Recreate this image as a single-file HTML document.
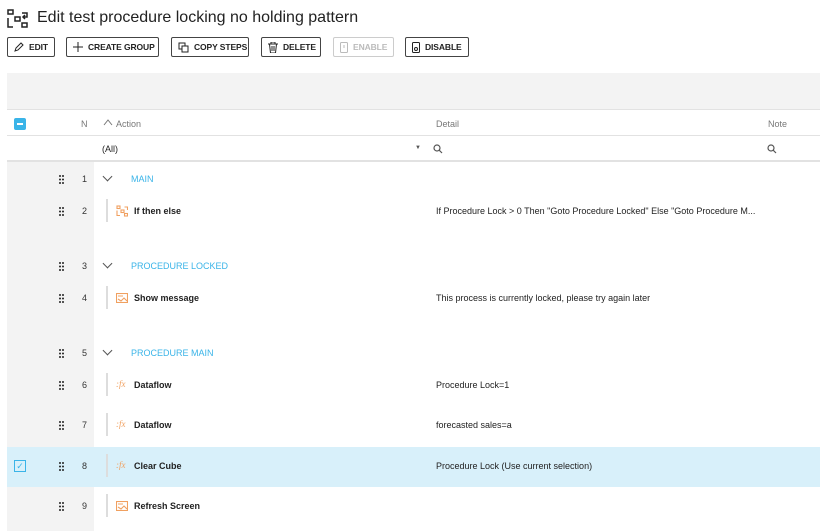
<!DOCTYPE html>
<html><head><style>
*{margin:0;padding:0;box-sizing:border-box}
body{width:820px;height:531px;overflow:hidden;background:#fff;font-family:"Liberation Sans",sans-serif;color:#222;position:relative}
.a{position:absolute}
.btn{position:absolute;top:37px;height:20px;border:1px solid #444;border-radius:2px;font-size:8.5px;font-weight:bold;display:flex;align-items:center;padding-left:6px;gap:5px;color:#222;white-space:nowrap;letter-spacing:-0.1px}
.btn svg{flex:none}
.btn.dis{border-color:#ccc;color:#bbb}
.grip{position:absolute;left:59px}
.n{position:absolute;left:82px;font-size:9px;color:#333}
.chev{position:absolute;left:104px;width:7px;height:7px;border-right:1px solid #555;border-bottom:1px solid #555;transform:rotate(45deg)}
.grp{position:absolute;left:131px;font-size:9px;color:#3ab4e8}
.bar{position:absolute;left:106px;width:2px;height:23px;background:#ddd}
.nm{position:absolute;left:134px;font-size:9px;font-weight:bold}
.dt{position:absolute;left:436px;font-size:9px}
.ic{position:absolute;left:116px}
.fx{position:absolute;left:116px;font-size:9px;color:#f0a060;font-style:italic;font-family:"Liberation Serif",serif}
</style></head><body>
<svg width="0" height="0" style="position:absolute"><defs><g id="g"><circle cx="1" cy="1" r="1"/><circle cx="4" cy="1" r="1"/><circle cx="1" cy="4.5" r="1"/><circle cx="4" cy="4.5" r="1"/><circle cx="1" cy="8" r="1"/><circle cx="4" cy="8" r="1"/></g></defs></svg>
<svg class="a" style="left:7px;top:9px" width="22" height="20" viewBox="0 0 22 20" fill="none" stroke="#222" stroke-width="1.5"><rect x="1" y="1" width="5" height="4"/><rect x="8" y="8" width="5" height="4"/><rect x="15" y="14" width="5" height="4"/><path d="M1 9v9h5M15 4h5v4h-4M18 6l-2 2 2 2"/></svg>
<div class="a" style="left:37px;top:9px;font-size:16px;color:#222">Edit test procedure locking no holding pattern</div>
<div class="btn" style="left:7px;width:48px"><svg width="10" height="10" viewBox="0 0 10 10" fill="none" stroke="#222"><path d="M1 9l1-3 5-5 2 2-5 5z"/></svg>EDIT</div>
<div class="btn" style="left:66px;width:93px"><svg width="10" height="10" viewBox="0 0 10 10" stroke="#222"><path d="M5 0v10M0 5h10"/></svg>CREATE GROUP</div>
<div class="btn" style="left:171px;width:78px"><svg width="11" height="11" viewBox="0 0 11 11" fill="none" stroke="#222"><rect x="1" y="1" width="6" height="6"/><rect x="4" y="4" width="6" height="6" fill="#fff"/></svg>COPY STEPS</div>
<div class="btn" style="left:261px;width:60px"><svg width="10" height="11" viewBox="0 0 10 11" fill="none" stroke="#222"><path d="M0 2h10M3 2V0h4v2M1.5 2l1 9h5l1-9M4 4v5M6 4v5"/></svg>DELETE</div>
<div class="btn dis" style="left:333px;width:61px"><svg width="8" height="11" viewBox="0 0 8 11" fill="none" stroke="#bbb"><rect x="0.5" y="0.5" width="7" height="10" rx="1"/><path d="M4 3v3"/></svg>ENABLE</div>
<div class="btn" style="left:405px;width:64px"><svg width="8" height="11" viewBox="0 0 8 11" fill="none" stroke="#222"><rect x="0.5" y="0.5" width="7" height="10" rx="1"/><circle cx="4" cy="7" r="1.5"/></svg>DISABLE</div>
<div class="a" style="left:7px;top:73px;width:813px;height:37px;background:#f3f3f3;border-bottom:1px solid #e2e2e2"></div>
<div class="a" style="left:7px;top:135px;width:813px;height:1px;background:#e2e2e2"></div>
<div class="a" style="left:7px;top:160px;width:813px;height:2px;background:#e2e2e2"></div>
<div class="a" style="left:14px;top:118px;width:12px;height:12px;background:#3ab4e8;border-radius:2px"><div style="margin:5px 3px;height:2px;background:#fff"></div></div>
<div class="a" style="left:81px;top:119px;font-size:9px;color:#777">N</div>
<svg class="a" style="left:103px;top:119px" width="10" height="7" viewBox="0 0 10 7" fill="none" stroke="#777"><path d="M1 6l4-5 4 5"/></svg>
<div class="a" style="left:116px;top:119px;font-size:9px;color:#777">Action</div>
<div class="a" style="left:436px;top:119px;font-size:9px;color:#777">Detail</div>
<div class="a" style="left:768px;top:119px;font-size:9px;color:#777">Note</div>
<div class="a" style="left:102px;top:144px;font-size:9px">(All)</div>
<div class="a" style="left:415px;top:145px;font-size:6px;color:#555">▼</div>
<svg class="a" style="left:433px;top:144px" width="10" height="10" viewBox="0 0 10 10" fill="none" stroke="#555" stroke-width="1.2"><circle cx="4" cy="4" r="3"/><path d="M6.2 6.2L9 9"/></svg>
<svg class="a" style="left:767px;top:144px" width="10" height="10" viewBox="0 0 10 10" fill="none" stroke="#555" stroke-width="1.2"><circle cx="4" cy="4" r="3"/><path d="M6.2 6.2L9 9"/></svg>
<div class="a" style="left:7px;top:162px;width:87px;height:369px;background:#f3f3f3"></div>
<div class="a" style="left:7px;top:447px;width:813px;height:40px;background:#d8f0fa"></div>
<div class="a" style="left:14px;top:460px;width:12px;height:12px;border:1px solid #3ab4e8;color:#3ab4e8;font-size:9px;line-height:10px;text-align:center">✓</div>

<svg class="grip" style="top:175px" width="5" height="9" fill="#222"><use href="#g"/></svg><div class="n" style="top:174px">1</div><div class="chev" style="top:173px"></div><div class="grp" style="top:174px">MAIN</div>
<svg class="grip" style="top:207px" width="5" height="9" fill="#222"><use href="#g"/></svg><div class="n" style="top:206px">2</div><div class="bar" style="top:199px"></div>
<svg class="ic" style="top:205px" width="12" height="12" viewBox="0 0 12 12" fill="none" stroke="#f0a060" stroke-width="1.1"><rect x="1" y="1" width="3" height="2.5"/><rect x="5" y="5" width="3" height="2.5"/><rect x="8.5" y="8.5" width="3" height="2.5"/><path d="M1 5.5v5h3M8.5 2h3v3"/></svg>
<div class="nm" style="top:206px">If then else</div><div class="dt" style="top:206px">If Procedure Lock &gt; 0 Then "Goto Procedure Locked" Else "Goto Procedure M...</div>
<svg class="grip" style="top:262px" width="5" height="9" fill="#222"><use href="#g"/></svg><div class="n" style="top:261px">3</div><div class="chev" style="top:260px"></div><div class="grp" style="top:261px">PROCEDURE LOCKED</div>
<svg class="grip" style="top:294px" width="5" height="9" fill="#222"><use href="#g"/></svg><div class="n" style="top:293px">4</div><div class="bar" style="top:286px"></div>
<svg class="ic" style="top:293px" width="12" height="10" viewBox="0 0 12 10" fill="none" stroke="#f0a060" stroke-width="1.1"><rect x="0.5" y="0.5" width="11" height="9"/><path d="M2 3h5M2 6l3 2 3-3 3 3"/></svg>
<div class="nm" style="top:293px">Show message</div><div class="dt" style="top:293px">This process is currently locked, please try again later</div>
<svg class="grip" style="top:349px" width="5" height="9" fill="#222"><use href="#g"/></svg><div class="n" style="top:348px">5</div><div class="chev" style="top:347px"></div><div class="grp" style="top:348px">PROCEDURE MAIN</div>
<svg class="grip" style="top:381px" width="5" height="9" fill="#222"><use href="#g"/></svg><div class="n" style="top:380px">6</div><div class="bar" style="top:373px"></div><div class="fx" style="top:379px">:fx</div><div class="nm" style="top:380px">Dataflow</div><div class="dt" style="top:380px">Procedure Lock=1</div>
<svg class="grip" style="top:421px" width="5" height="9" fill="#222"><use href="#g"/></svg><div class="n" style="top:420px">7</div><div class="bar" style="top:413px"></div><div class="fx" style="top:419px">:fx</div><div class="nm" style="top:420px">Dataflow</div><div class="dt" style="top:420px">forecasted sales=a</div>
<svg class="grip" style="top:462px" width="5" height="9" fill="#222"><use href="#g"/></svg><div class="n" style="top:461px">8</div><div class="bar" style="top:454px"></div><div class="fx" style="top:460px">:fx</div><div class="nm" style="top:461px">Clear Cube</div><div class="dt" style="top:461px">Procedure Lock (Use current selection)</div>
<svg class="grip" style="top:502px" width="5" height="9" fill="#222"><use href="#g"/></svg><div class="n" style="top:501px">9</div><div class="bar" style="top:494px"></div>
<svg class="ic" style="top:501px" width="12" height="10" viewBox="0 0 12 10" fill="none" stroke="#f0a060" stroke-width="1.1"><rect x="0.5" y="0.5" width="11" height="9"/><path d="M2 3h5M2 6l3 2 3-3 3 3"/></svg>
<div class="nm" style="top:501px">Refresh Screen</div>
</body></html>
